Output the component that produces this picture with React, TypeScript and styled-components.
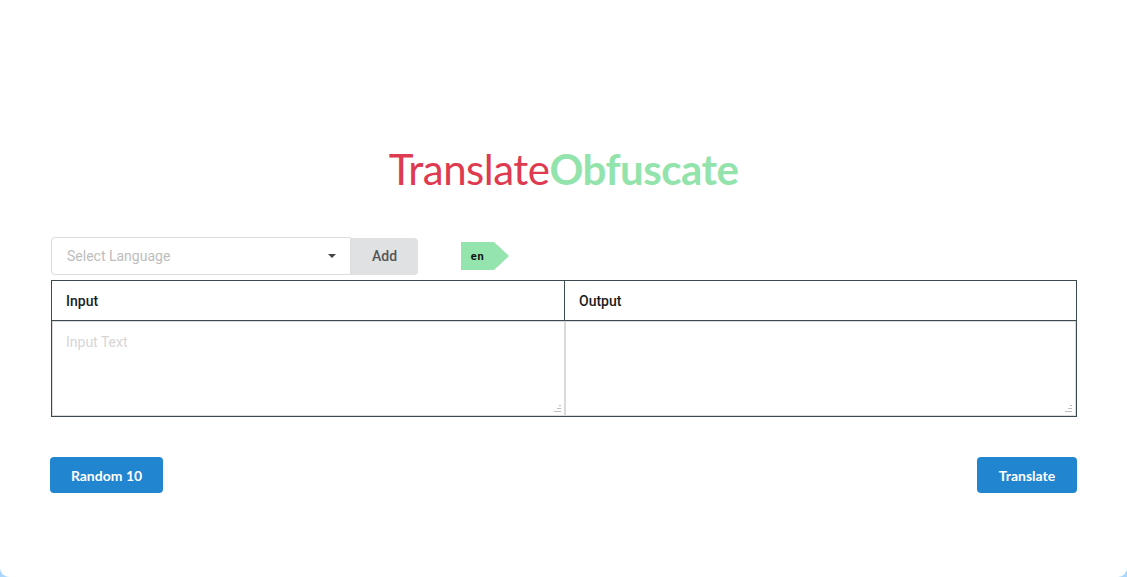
import React, { FC, useState } from 'react';

import styled, { createGlobalStyle } from 'styled-components';

const GlobalStyle = createGlobalStyle`
  html, body {
    margin: 0;
    padding: 0;
    background: #a9d6fb;
  }
  * {
    box-sizing: border-box;
  }
`;

const Card = styled.div`
  height: 577px;
  background: #ffffff;
  border-radius: 0 0 9px 9px;
  padding: 144px 50px 0 50px;
  font-family: Roboto, 'Liberation Sans', sans-serif;
`;

const Title = styled.h1`
  margin: 0;
  text-align: center;
  font-family: Lato, sans-serif;
  font-weight: 400;
  font-size: 42px;
  line-height: 50px;
  letter-spacing: -0.5px;
`;

const Word = styled.span<{ $color: string; $bold?: boolean }>`
  color: ${(p) => p.$color};
  font-weight: ${(p) => (p.$bold ? 700 : 400)};
`;

const Toolbar = styled.div`
  display: flex;
  align-items: center;
  margin-top: 43px;
  padding-left: 1px;
`;

const SelectBox = styled.div`
  display: flex;
  align-items: center;
  justify-content: space-between;
  width: 300px;
  height: 38px;
  padding: 0 14px 0 15px;
  border: 1px solid #dcdcdc;
  border-radius: 4px 0 0 4px;
  color: #bdbdbd;
  font-size: 14px;
`;

const Caret = styled.span`
  width: 0;
  height: 0;
  border-left: 4px solid transparent;
  border-right: 4px solid transparent;
  border-top: 4px solid #444;
`;

const AddButton = styled.button`
  width: 67px;
  height: 37px;
  border: none;
  border-radius: 0 4px 4px 0;
  background: #e0e1e2;
  color: #555;
  font-family: Roboto, sans-serif;
  font-weight: 500;
  font-size: 14px;
`;

const Tag = styled.div`
  position: relative;
  display: flex;
  align-items: center;
  justify-content: center;
  margin-left: 43px;
  width: 33px;
  height: 28px;
  background: #94e4ad;
  color: #111;
  font-size: 11px;
  font-weight: 700;
  letter-spacing: 0.6px;

  &::after {
    content: '';
    position: absolute;
    left: 33px;
    top: 0;
    border-top: 14px solid transparent;
    border-bottom: 14px solid transparent;
    border-left: 15px solid #94e4ad;
  }
`;

const Table = styled.div`
  display: grid;
  grid-template-columns: 513px 1fr;
  margin: 5px 0 0 1px;
  border: 1px solid #3b4a4f;
`;

const HeadCell = styled.div<{ $first?: boolean }>`
  height: 40px;
  padding: 0 14px;
  display: flex;
  align-items: center;
  font-size: 14px;
  font-weight: 500;
  color: #1b1c1d;
  border-bottom: 1px solid #3b4a4f;
  border-right: ${(p) => (p.$first ? '1px solid #3b4a4f' : 'none')};
`;

const BodyCell = styled.div`
  position: relative;
  display: flex;
`;

const TextArea = styled.textarea`
  width: 100%;
  height: 95px;
  padding: 12px 13px;
  border: 1px solid #dadada;
  font-family: Roboto, sans-serif;
  font-size: 14px;
  color: #333;
  outline: none;
  resize: none;

  &::placeholder {
    color: #d6d6d6;
  }
`;

const Grip = styled.span`
  position: absolute;
  right: 4px;
  bottom: 4px;
  width: 7px;
  height: 7px;
  background:
    linear-gradient(#bdbdbd, #bdbdbd) 5px 0 / 2px 1px no-repeat,
    linear-gradient(#bdbdbd, #bdbdbd) 3px 3px / 4px 1px no-repeat,
    linear-gradient(#bdbdbd, #bdbdbd) 0 6px / 7px 1px no-repeat;
  pointer-events: none;
`;

const Actions = styled.div`
  display: flex;
  justify-content: space-between;
  margin-top: 40px;
`;

const PrimaryButton = styled.button<{ $width: number }>`
  width: ${(p) => p.$width}px;
  height: 36px;
  border: none;
  border-radius: 4px;
  background: #2185d0;
  color: #ffffff;
  font-family: Lato, sans-serif;
  font-weight: 700;
  font-size: 14px;
`;

const App: FC = () => {
  const [input, setInput] = useState('');

  return (
    <>
      <GlobalStyle />
      <Card>
        <Title>
          <Word $color="#de3a50">Translate</Word>
          <Word $color="#93e3ac" $bold>
            Obfuscate
          </Word>
        </Title>
        <Toolbar>
          <SelectBox>
            Select Language
            <Caret />
          </SelectBox>
          <AddButton>Add</AddButton>
          <Tag>en</Tag>
        </Toolbar>
        <Table>
          <HeadCell $first>Input</HeadCell>
          <HeadCell>Output</HeadCell>
          <BodyCell>
            <TextArea
              placeholder="Input Text"
              value={input}
              onChange={(e) => setInput(e.target.value)}
            />
            <Grip />
          </BodyCell>
          <BodyCell>
            <TextArea readOnly />
            <Grip />
          </BodyCell>
        </Table>
        <Actions>
          <PrimaryButton $width={113}>Random 10</PrimaryButton>
          <PrimaryButton $width={100}>Translate</PrimaryButton>
        </Actions>
      </Card>
    </>
  );
};

export default App;
